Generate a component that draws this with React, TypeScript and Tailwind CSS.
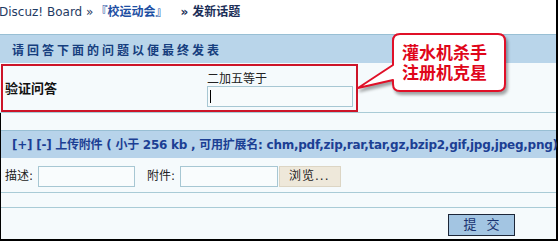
import React from "react";

const cjk = "font-['DejaVu_Sans','Noto_Sans_CJK_SC',sans-serif]";

export default function App() {
  return (
    <div className={`relative w-[558px] h-[241px] overflow-hidden bg-white ${cjk} text-[12px]`}>
      {/* breadcrumb */}
      <div className="h-[34px] border-r-2 border-black flex items-start pt-[4px] pl-0 whitespace-nowrap leading-[16px]">
        <span className="text-[#1f3b63] ml-[-1px] text-[12px]">Discuz! Board »</span>
        <span className="text-[#1d4fa3] font-bold ml-[2px]">『校运动会』</span>
        <span className="text-[#1c2f58] font-bold ml-[13px]">» 发新话题</span>
      </div>
      {/* panel */}
      <div className="h-[207px] border-r-2 border-b-2 border-black bg-[#f5fafc] flex flex-col">
        {/* band 1 */}
        <div className="h-[29px] border-t border-[#98bfd4] bg-[#b9d5ea] flex items-center pl-[12px] pt-[3px] font-bold tracking-[3px] text-[#163e7e] leading-none">
          请回答下面的问题以便最终发表
        </div>
        {/* question row */}
        <div className="relative h-[50px] border-b border-[#a9cbd6] flex">
          <div className="absolute left-[1px] top-[1px] w-[357px] h-[48px] border-2 border-[#cc1428]" />
          <div className="w-[207px] flex items-center pl-[5px] pt-[2px] font-bold text-[#111] text-[13px]">验证问答</div>
          <div className="flex flex-col pt-[9px]">
            <div className="text-[#222] leading-[14px] h-[14px]">二加五等于</div>
            <div className="relative mt-[0px] w-[146px] h-[21px] border border-[#a7c7d3] bg-[#f7fbfc]">
              <div className="absolute left-[2px] top-[3px] w-[1px] h-[13px] bg-black" />
            </div>
          </div>
        </div>
        {/* lower part with left border */}
        <div className="flex-1 border-l border-black flex flex-col">
          <div className="h-[17px]" />
          {/* band 2 */}
          <div className="h-[28px] border-t border-[#98bfd4] bg-[#b7d3ea] flex items-center pl-[11px] font-bold text-[#1c3f94] whitespace-nowrap text-[12px] tracking-[-0.25px]">
            [+] [-] 上传附件 ( 小于 256 kb , 可用扩展名: chm,pdf,zip,rar,tar,gz,bzip2,gif,jpg,jpeg,png)
          </div>
          {/* attachment row */}
          <div className="h-[35px] border-b border-[#a9cbd6] flex items-center pl-[4px] pt-[2px] text-[#222]">
            <span className="w-[33px]">描述:</span>
            <div className="w-[97px] h-[21px] border border-[#a7c7d3] bg-[#f9fcfd]" />
            <span className="ml-[12px] w-[33px]">附件:</span>
            <div className="w-[98px] h-[21px] border border-[#a7c7d3] bg-[#f9fcfd]" />
            <div className="ml-[1px] w-[62px] h-[21px] border border-[#dcd5c4] bg-[#eee8da] flex items-center pl-[9px] tracking-[1px] text-[#222]">
              浏览...
            </div>
          </div>
          <div className="h-[15px] border-b border-[#a9cbd6]" />
          <div className="flex-1 flex justify-end items-start pt-[6px] pr-[41px]">
            <div className="w-[67px] h-[22px] border border-[#1c2638] bg-[#a3c5e2] flex items-center justify-center text-[#1a3370] text-[13px] tracking-[10px] pl-[10px]">
              提交
            </div>
          </div>
        </div>
      </div>
      {/* callout */}
      <div className="absolute left-[355px] top-[32px] w-[160px] h-[66px]">
        <svg width="160" height="66" className="absolute inset-0 drop-shadow-[2px_3px_1.5px_rgba(0,0,0,0.35)]">
          <path
            d="M45 2 H143 Q150 2 150 9 V52 Q150 59 143 59 H45 Q38 59 38 52 V48 L3 56 L38 33 V9 Q38 2 45 2 Z"
            fill="#ffffff"
            stroke="#e01028"
            strokeWidth="2"
            strokeLinejoin="round"
          />
        </svg>
        <div className="absolute left-[47px] top-[11px] flex flex-col gap-[3px] text-[17px] leading-[17px] font-bold text-[#e0061a] whitespace-nowrap font-['Noto_Sans_CJK_SC',sans-serif]">
          <div className="h-[17px]">灌水机杀手</div>
          <div className="h-[17px]">注册机克星</div>
        </div>
      </div>
    </div>
  );
}
